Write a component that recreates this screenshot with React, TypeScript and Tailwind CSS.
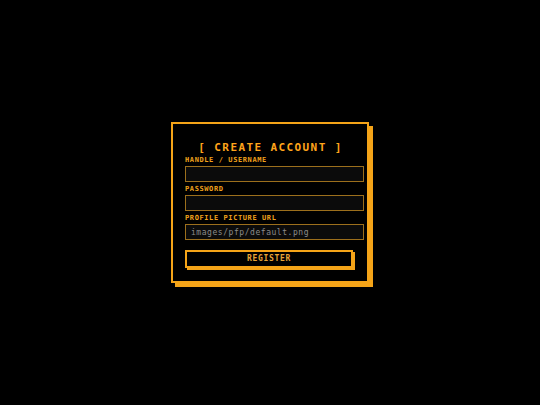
import React from 'react';

const mono = { fontFamily: '"DejaVu Sans Mono", "Liberation Mono", monospace' };

function Field({ label, placeholder, type = 'text' }: { label: string; placeholder?: string; type?: string }) {
  return (
    <div className="flex flex-col">
      <label className="mb-[2px] h-[7px] text-[7px] font-bold leading-[7px] tracking-[0.6px] text-[#f0a21c]">
        {label}
      </label>
      <input
        type={type}
        placeholder={placeholder}
        className="h-[16px] w-[179px] border border-[#9c6f1c] bg-[#0b0b0b] px-[5px] text-[8px] tracking-[0.55px] text-[#d0d0d0] outline-none placeholder:text-[#8c8c8c]"
        style={mono}
      />
    </div>
  );
}

export default function App() {
  return (
    <div className="flex h-[405px] w-[540px] items-center justify-center bg-black" style={mono}>
      <div className="flex w-[198px] flex-col border-2 border-[#f5a418] bg-black pb-[13px] pl-[12px] pr-[3px] pt-[18px] shadow-[4px_4px_0_0_#f5a418]">
        <h1 className="-ml-[12px] -mr-[3px] mb-[4px] h-[11px] pl-[1px] text-center text-[11px] font-bold leading-[11px] tracking-[1.4px] text-[#ffa41b]">
          [ CREATE ACCOUNT ]
        </h1>
        <div className="flex flex-col gap-[4px]">
          <Field label="HANDLE / USERNAME" />
          <Field label="PASSWORD" type="password" />
          <Field label="PROFILE PICTURE URL" placeholder="images/pfp/default.png" />
        </div>
        <button
          type="button"
          className="mt-[10px] h-[18px] w-[168px] border-2 border-[#f5a418] bg-black text-[8px] font-bold leading-none tracking-[0.7px] text-[#e9a436] shadow-[2px_2px_0_0_#f5a418]"
          style={mono}
        >
          REGISTER
        </button>
      </div>
    </div>
  );
}
